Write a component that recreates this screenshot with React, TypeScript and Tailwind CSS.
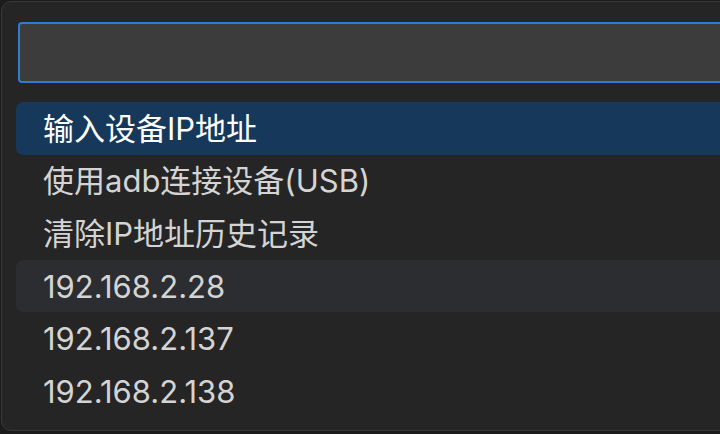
import React from "react";

const items = [
  "输入设备IP地址",
  "使用adb连接设备(USB)",
  "清除IP地址历史记录",
  "192.168.2.28",
  "192.168.2.137",
  "192.168.2.138",
];

export default function App() {
  const selected = 0;
  const hovered = 3;

  return (
    <div
      className="w-[720px] h-[434px] overflow-hidden bg-[#1c1c1c] pt-[1px] pl-[1px]"
      style={{ fontFamily: '"Inter", "Noto Sans CJK SC", sans-serif' }}
    >
      <div className="w-[780px] h-[430px] rounded-[10px] border border-[#383838] bg-[#252526] pt-[20px]">
        {/* search box */}
        <div className="ml-[16px] h-[61px] rounded-[4px] border-2 border-[#2f7cd0] bg-[#3c3c3c]" />

        {/* options */}
        <ul className="mt-[19px] ml-[14px]">
          {items.map((item, i) => (
            <li
              key={i}
              className={`h-[52.6px] flex items-center pl-[27px] rounded-[7px] text-[31px] leading-none ${
                i === selected
                  ? "bg-[#15385b] text-white"
                  : i === hovered
                  ? "bg-[#2b2d30] text-[#d4d4d4]"
                  : "text-[#d4d4d4]"
              }`}
            >
              {item}
            </li>
          ))}
        </ul>
      </div>
    </div>
  );
}
